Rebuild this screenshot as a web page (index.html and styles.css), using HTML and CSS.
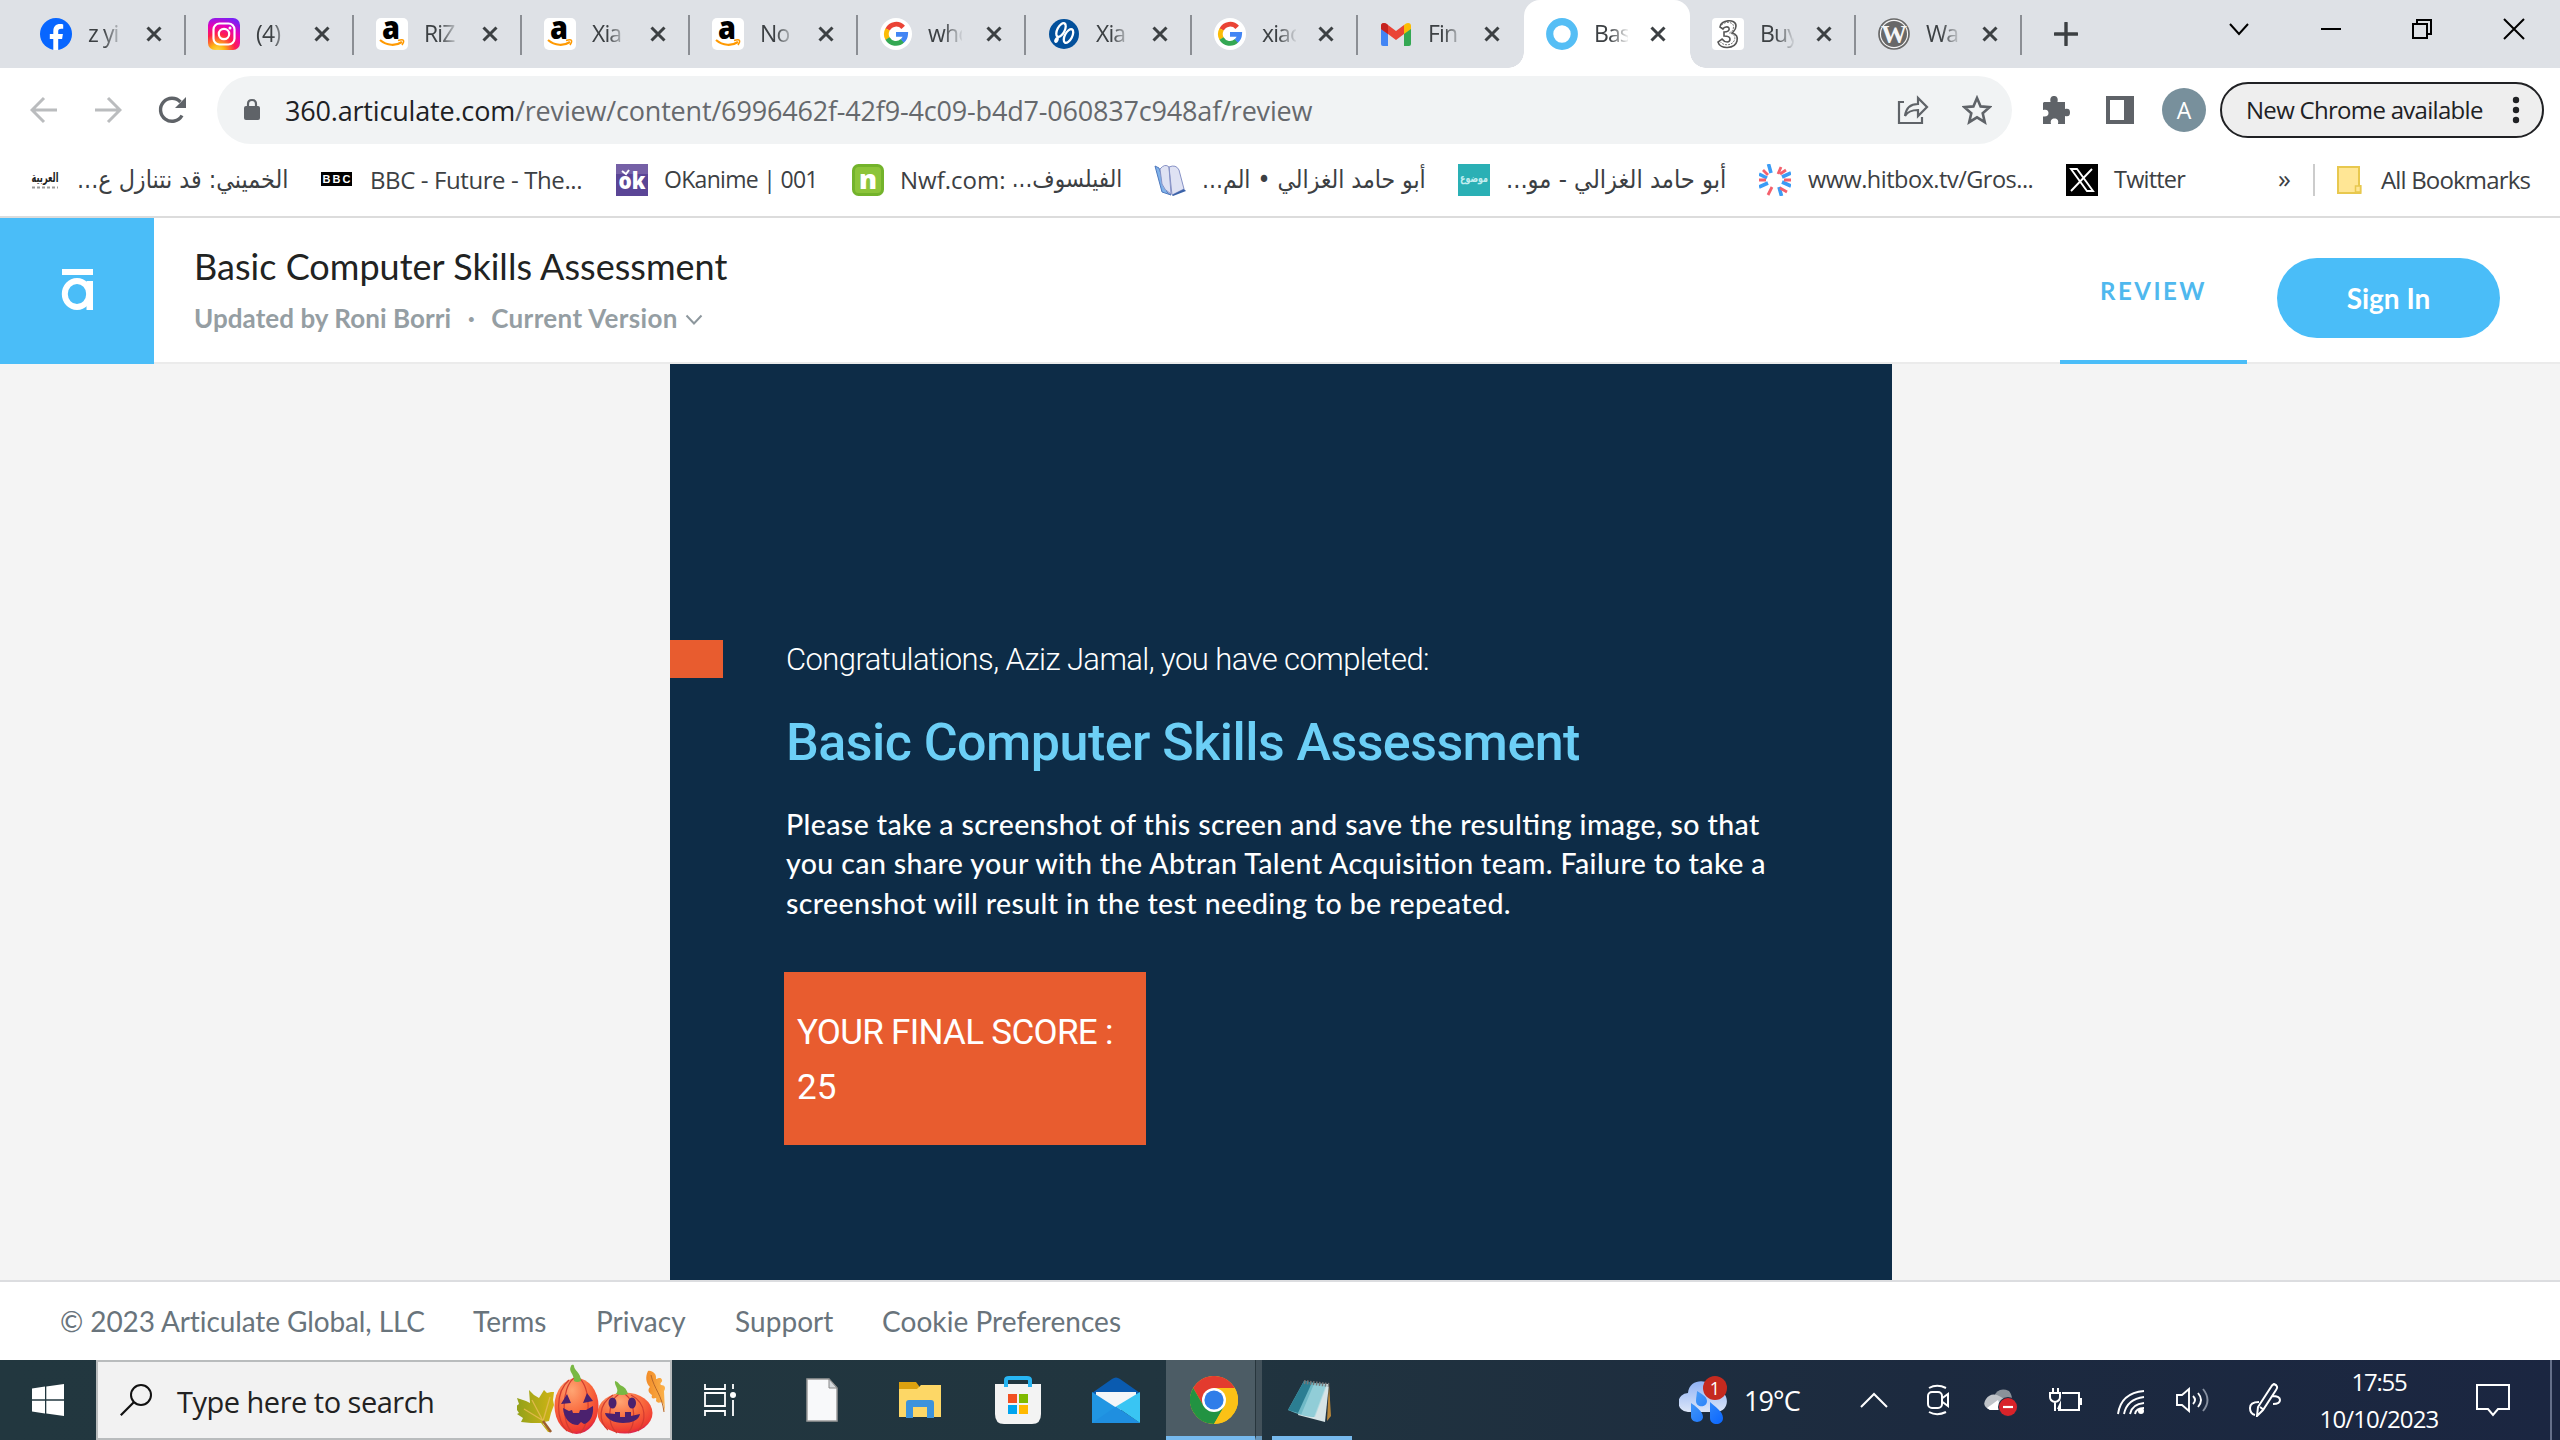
FILE: index.html
```html
<!DOCTYPE html>
<html lang="en">
<head>
<meta charset="utf-8">
<title>Basic Computer Skills Assessment</title>
<link rel="stylesheet" href="styles.css">
</head>
<body>
<svg class="defs" aria-hidden="true">
  <defs>
    <symbol id="x" viewBox="0 0 16 16"><path d="M1.500 1.500 14.500 14.500M14.500 1.500 1.500 14.500" stroke="#3c4043" stroke-width="3" fill="none"/></symbol>
    <symbol id="amazon" viewBox="0 0 32 32"><rect width="32" height="32" rx="5" fill="#fff"/><text x="15" y="21" font-family="Open Sans, sans-serif" font-size="32" font-weight="800" text-anchor="middle" textLength="18" lengthAdjust="spacingAndGlyphs">a</text><path d="M4 22c7 6 16 6 22 2" fill="none" stroke="#f90" stroke-width="2.200"/><path d="M22 22.500c3-1 5-1 5.500 0s-.5 3-1.500 4.500" fill="none" stroke="#f90" stroke-width="1.500"/></symbol>
    <symbol id="google" viewBox="0 0 32 32"><circle cx="16" cy="16" r="16" fill="#fff"/><g fill="none" stroke-width="4.800"><path d="M23.200 9.300A9.600 9.600 0 0 0 7.600 11.500" stroke="#ea4335"/><path d="M7.600 11.300a9.600 9.600 0 0 0 0 9.400" stroke="#fbbc05"/><path d="M7.500 20.500a9.600 9.600 0 0 0 15 2.300" stroke="#34a853"/><path d="M22.300 23A9.600 9.600 0 0 0 25.600 16.300H16" stroke="#4285f4"/></g></symbol>
  </defs>
</svg>

<header class="tabs">
  <div class="tab"><svg class="fav" viewBox="0 0 32 32"><circle cx="16" cy="16" r="16" fill="#0866ff"/><path d="M13.300 32V21H9.800v-5h3.500v-2.500c0-5 2.300-7.500 7-7.500 1 0 2.200.2 2.900.4v4.400h-2c-2.300 0-3 1-3 2.800V16h4.700l-.8 5h-3.900v11z" fill="#fff"/></svg><span class="tt">z yi</span><svg class="x"><use href="#x"/></svg></div>
  <div class="tab"><svg class="fav" viewBox="0 0 32 32"><defs><radialGradient id="ig" cx=".3" cy="1.050" r="1.100"><stop offset="0" stop-color="#fd5"/><stop offset=".2" stop-color="#fdb813"/><stop offset=".5" stop-color="#ff1e4b"/><stop offset=".75" stop-color="#e800b8"/><stop offset="1" stop-color="#7a20f5"/></radialGradient></defs><rect width="32" height="32" rx="7" fill="url(#ig)"/><g fill="none" stroke="#fff" stroke-width="2.200"><rect x="5.500" y="5.500" width="21" height="21" rx="6"/><circle cx="16" cy="16" r="5.200"/></g><circle cx="22" cy="10" r="1.500" fill="#fff"/></svg><span class="tt">(4)</span><svg class="x"><use href="#x"/></svg></div>
  <div class="tab"><svg class="fav"><use href="#amazon"/></svg><span class="tt">RiZ</span><svg class="x"><use href="#x"/></svg></div>
  <div class="tab"><svg class="fav"><use href="#amazon"/></svg><span class="tt">Xia</span><svg class="x"><use href="#x"/></svg></div>
  <div class="tab"><svg class="fav"><use href="#amazon"/></svg><span class="tt">No</span><svg class="x"><use href="#x"/></svg></div>
  <div class="tab"><svg class="fav"><use href="#google"/></svg><span class="tt">who</span><svg class="x"><use href="#x"/></svg></div>
  <div class="tab"><svg class="fav" viewBox="0 0 32 32"><circle cx="16" cy="16" r="15" fill="#03509b"/><g fill="none" stroke="#fff" stroke-width="2.300"><ellipse cx="13" cy="12" rx="3.600" ry="7.500" transform="rotate(28 13 12)"/><ellipse cx="20.500" cy="18" rx="3.600" ry="7.500" transform="rotate(28 20.500 18)"/></g><ellipse cx="8.500" cy="22" rx="2" ry="3" fill="#fff" transform="rotate(28 8.500 22)"/></svg><span class="tt">Xia</span><svg class="x"><use href="#x"/></svg></div>
  <div class="tab"><svg class="fav"><use href="#google"/></svg><span class="tt">xiao</span><svg class="x"><use href="#x"/></svg></div>
  <div class="tab last"><svg class="fav" viewBox="0 0 32 32"><path d="M1 8v18q0 2 2 2h5V13z" fill="#4285f4"/><path d="M24 13v15h5q2 0 2-2V9z" fill="#34a853"/><path d="M1 8q0-3 3-3 2 0 4 2l8 6 8-6v9l-8 6-8-6-7-5z" fill="#ea4335"/><path d="M1 8q0-3 3-3 2 0 4 2v9l-7-5z" fill="#c5221f"/><path d="M24 7q2-2 4-2 3 0 3 3v3l-7 5z" fill="#fbbc04"/></svg><span class="tt">Fin</span><svg class="x"><use href="#x"/></svg></div>
  <div class="tab active"><svg class="fav" viewBox="0 0 32 32"><circle cx="16" cy="16" r="12.300" fill="#fff" stroke="#55bef5" stroke-width="7.200"/></svg><span class="tt">Bas</span><svg class="x"><use href="#x"/></svg></div>
  <div class="tab"><svg class="fav" viewBox="0 0 32 32"><rect width="32" height="32" rx="4" fill="#fff"/><path d="M8 9c0-7 16-9 16-1 0 4-2 5-4 7 4 1 6 4 5 8-2 8-17 9-19 1l4-3c3 4 8 4 8 0 0-3-3-3-6-3v-4c3 0 6-1 5-4-1-2-5-1-6 1z" fill="none" stroke="#555" stroke-width="1.600"/><path d="M9.500 7C14 2.500 22 4 21.500 9c0 4-3 5-4 6 5 1 6 4 5 7-2 6-11 6-14 2" fill="none" stroke="#777" stroke-width="1" stroke-dasharray="2 1"/></svg><span class="tt">Buy</span><svg class="x"><use href="#x"/></svg></div>
  <div class="tab"><svg class="fav" viewBox="0 0 32 32"><circle cx="16" cy="16" r="15" fill="#f5f5f5" stroke="#686868" stroke-width="1.700"/><circle cx="16" cy="16" r="13" fill="#686868"/><text x="16" y="25" text-anchor="middle" font-family="Liberation Serif, serif" font-size="26" font-weight="700" fill="#f5f5f5">W</text></svg><span class="tt">Wa</span><svg class="x"><use href="#x"/></svg></div>
  <svg class="plus" viewBox="0 0 24 24"><path d="M12 1v22M1 12h22" stroke="#3c4043" stroke-width="3.400" stroke-linecap="round"/></svg>
  <svg class="win" viewBox="0 0 22 22"><path d="M2 6l9 10 9-10" fill="none" stroke="#000" stroke-width="2"/></svg>
  <svg class="win" viewBox="0 0 22 22"><path d="M1 11h20" stroke="#000" stroke-width="2"/></svg>
  <svg class="win" viewBox="0 0 22 22"><path d="M2 6h14v14H2zM6 6V2h14v14h-4" fill="none" stroke="#000" stroke-width="2"/></svg>
  <svg class="win" viewBox="0 0 22 22"><path d="M1 1l20 20M21 1 1 21" fill="none" stroke="#000" stroke-width="2"/></svg>
</header>

<div class="toolbar">
  <svg class="back" viewBox="0 0 28 28"><path d="M27 14H3M14 2 2 14l12 12" fill="none" stroke="#babcbe" stroke-width="3"/></svg>
  <svg class="fwd" viewBox="0 0 28 28"><path d="M1 14h24M14 2l12 12-12 12" fill="none" stroke="#babcbe" stroke-width="3"/></svg>
  <svg class="reload" viewBox="0 0 30 30"><path d="M25 20.500A11.500 11.500 0 1 1 23.500 7" fill="none" stroke="#5f6368" stroke-width="3.400"/><path d="M29 2v11H18z" fill="#5f6368"/></svg>
  <div class="omni">
    <svg class="lock" viewBox="0 0 18 24"><rect x="1" y="8" width="16" height="14" rx="2" fill="#5f6368"/><path d="M5 9V6q0-4 4-4t4 4v3" fill="none" stroke="#5f6368" stroke-width="2.200"/></svg>
    <span class="url"><b>360.articulate.com</b>/review/content/6996462f-42f9-4c09-b4d7-060837c948af/review</span>
    <svg class="share" viewBox="0 0 32 30"><path d="M7 7H2v21h23v-6M8 21c1-8 6-12 13-12V3l9 9-9 9v-6c-6 0-10 1-13 6z" fill="none" stroke="#5f6368" stroke-width="2.200"/></svg>
    <svg class="star" viewBox="0 0 30 30"><path d="M15 3l3.600 8.400 9 .8-6.900 6 2.100 9-7.800-4.800-7.800 4.800 2.100-9-6.900-6 9-.8z" fill="none" stroke="#5f6368" stroke-width="2.600"/></svg>
  </div>
  <svg class="puzzle" viewBox="0 0 30 30"><path d="M3 7h6.500C8.500 2 11 1 13 1s4.500 1 3.500 6H24v7c4-1 5 1 5 3.500S28 22 24 21v8h-7c1-4-1-5.500-3.500-5.500S9 25 10 29H2v-7.500c4 .5 5.500-1 5.500-3.500S6 14 2 15V8z" fill="#5f6368"/></svg>
  <svg class="panel" viewBox="0 0 28 28"><path d="M0 0h28v28H0zM4 4v20h14V4z" fill="#5f6368" fill-rule="evenodd"/></svg>
  <span class="avatar">A</span>
  <div class="chip"><span class="chiptext">New Chrome available</span><svg class="dots" viewBox="0 0 8 28"><circle cx="4" cy="4" r="3.200"/><circle cx="4" cy="14" r="3.200"/><circle cx="4" cy="24" r="3.200"/></svg></div>
</div>

<nav class="bookmarks">
  <div class="bm"><svg viewBox="0 0 32 32"><text x="16" y="18" direction="rtl" text-anchor="middle" font-family="DejaVu Sans, sans-serif" font-size="13" font-weight="700" fill="#222" textLength="27" lengthAdjust="spacingAndGlyphs">العربية</text><path d="M3 23.500h26" stroke="#999" stroke-width="2" stroke-dasharray="3 2"/></svg><span class="ar b1" dir="rtl">الخميني: قد نتنازل ع...</span></div>
  <div class="bm"><svg viewBox="0 0 32 32"><path d="M1 8h31v14H1z"/><g font-family="Liberation Sans, sans-serif" font-size="11" font-weight="700" fill="#fff" text-anchor="middle"><text x="6.500" y="19">B</text><text x="16.500" y="19">B</text><text x="26.500" y="19">C</text></g></svg><span class="b2">BBC - Future - The...</span></div>
  <div class="bm"><svg viewBox="0 0 32 32"><path d="M0 0h32v32H0z" fill="#5a4596"/><path d="M0 0h32v10H0z" fill="#7560a6"/><text x="16" y="25" text-anchor="middle" font-family="Open Sans, sans-serif" font-size="22" font-weight="800" fill="#fff" textLength="27" lengthAdjust="spacingAndGlyphs">ok</text><path d="M6 7l4 3 3-4" fill="none" stroke="#fff" stroke-width="2"/></svg><span class="b3">OKanime | 001</span></div>
  <div class="bm"><svg viewBox="0 0 32 32"><rect x="1.500" y="1.500" width="29" height="29" rx="5" fill="#8cc43a" stroke="#73b32b" stroke-width="3"/><text x="16" y="25" text-anchor="middle" font-family="Open Sans, sans-serif" font-size="27" font-weight="800" fill="#fff">n</text></svg><span class="b4">Nwf.com:&nbsp;</span><span class="ar b4a" dir="rtl">الفيلسوف...</span></div>
  <div class="bm"><svg viewBox="0 0 32 32"><path d="M1 2l4 2 8 24 4 3-9-3z" fill="#7fb2ea" stroke="#4f78bd"/><path d="M6 5q5-6 9-2l2 27Q10 26 8 20zM15 3q7-3 10 3l5 19-12 6z" fill="#dfe2f3" stroke="#8792c6"/><path d="M18 31l12-6 2 2-13 5z" fill="#3a62a8"/></svg><span class="ar b5" dir="rtl">أبو حامد الغزالي • الم...</span></div>
  <div class="bm"><svg viewBox="0 0 32 32"><path d="M0 0h32v32H0z" fill="#2ab0b5"/><text x="16" y="18" direction="rtl" text-anchor="middle" font-family="DejaVu Sans, sans-serif" font-size="11" font-weight="700" fill="#c3eef0" textLength="28" lengthAdjust="spacingAndGlyphs">موضوع</text></svg><span class="ar b6" dir="rtl">أبو حامد الغزالي - مو...</span></div>
  <div class="bm"><svg viewBox="0 0 32 32" fill="none" stroke-width="3.600"><path d="M12 9 9.500 0M8 14 0 10M9 19 0 23M20 23l2.500 9M23 18l9 4M23 13l9-4" stroke="#3b9cf5"/><path d="M19 10l3-7M9 11 4 6M7 16H0M13 23l-4 8M21 24l7 4M25 16h7M21 10l6-4" stroke="#f4606c" stroke-width="2.800"/></svg><span class="b7">www.hitbox.tv/Gros...</span></div>
  <div class="bm"><svg viewBox="0 0 32 32"><path d="M0 0h32v32H0z"/><path d="M5 5h6l16 22h-6zM26 5 5 27" fill="none" stroke="#fff" stroke-width="1.900"/></svg><span class="b8">Twitter</span></div>
  <span class="more">»</span>
  <div class="bm all"><svg viewBox="0 0 32 32"><path d="M1 3h21v19h1.500v7H1z" fill="#ffe695" stroke="#e8c84e" stroke-width="2"/><path d="M18.500 28v-6h5v6z" fill="#ffe695" stroke="#e8c84e" stroke-width="1.500"/></svg><span class="b9">All Bookmarks</span></div>
</nav>

<section class="apphead">
  <div class="logo"><svg viewBox="0 0 34 44"><path d="M1 1h31v6H1z" fill="#fff"/><ellipse cx="16" cy="26" rx="12.200" ry="13" fill="none" stroke="#fff" stroke-width="6"/><path d="M25.500 13H32v29h-6.500z" fill="#fff"/></svg></div>
  <div class="titles">
    <h1>Basic Computer Skills Assessment</h1>
    <p><span class="s1">Updated by Roni Borri</span><i>·</i><span class="s2">Current Version</span><svg viewBox="0 0 18 12"><path d="M1.500 1.500 9 9.500l7.500-8" fill="none" stroke="#8d979d" stroke-width="2"/></svg></p>
  </div>
  <div class="review">REVIEW</div>
  <button class="signin">Sign In</button>
</section>

<main class="stage">
  <article class="slide">
    <div class="lead"><i class="mark"></i><span class="congrats">Congratulations, Aziz Jamal, you have completed:</span></div>
    <h2>Basic Computer Skills Assessment</h2>
    <p class="para">Please take a screenshot of this screen and save the resulting image, so that<br>you can share your with the Abtran Talent Acquisition team. Failure to take a<br>screenshot will result in the test needing to be repeated.</p>
    <div class="score">YOUR FINAL SCORE :<br><span class="points">25</span></div>
  </article>
</main>

<footer class="foot">
  <span>© 2023 Articulate Global, LLC</span><span>Terms</span><span>Privacy</span><span>Support</span><span>Cookie Preferences</span>
</footer>

<div class="taskbar">
  <div class="start"><svg viewBox="0 0 32 32" fill="#fff"><path d="M0 4.500 13 2.600V15.300H0zM14.300 2.400 32 0v15.300H14.300zM0 16.700h13v12.700L0 27.500zM14.300 16.700H32V32l-17.700-2.400z"/></svg></div>
  <div class="search">
    <svg class="glass" viewBox="0 0 32 32"><circle cx="21" cy="11" r="10" fill="none" stroke="#111" stroke-width="2"/><path d="M14 18 .8 31.200" stroke="#111" stroke-width="2.200"/></svg>
    <span class="ph">Type here to search</span>
    <svg class="pumpkins" viewBox="0 0 150 72">
      <defs><radialGradient id="pk" cx=".4" cy=".22" r=".85"><stop offset="0" stop-color="#ffa573"/><stop offset=".5" stop-color="#f9683c"/><stop offset=".85" stop-color="#ef3a32"/><stop offset="1" stop-color="#c90f63"/></radialGradient><linearGradient id="lf" x1="0" x2="1"><stop offset="0" stop-color="#8fa01a"/><stop offset="1" stop-color="#d0b414"/></linearGradient><linearGradient id="oak" x1="0" x2="1"><stop offset="0" stop-color="#f28c28"/><stop offset="1" stop-color="#fbb24a"/></linearGradient></defs>
      <path d="M12 26l5 5 5 3 5-8 3 3 4-1 3 0-1 8 1 5-3 8-2 8-5 1-1 2 8 8-3 0-7-9-10 0-10-1 2-4-6-4 2-1-4-6 4-3-2-6 9 3 4 2z" fill="url(#lf)"/><path d="M15 36l10 19 7 12M7 45l18 11M33 33l-7 24" fill="none" stroke="#e0b94a" stroke-width="1.300"/><path d="M26 57l8 11" stroke="#9c5d2c" stroke-width="2.500"/>
      <ellipse cx="59.500" cy="42" rx="22" ry="28" fill="url(#pk)"/><ellipse cx="108" cy="49" rx="27.500" ry="20.500" fill="url(#pk)"/>
      <path d="M57 14C44 24 44 60 56 69M62 14c12 10 12 46 1 55M52 16c-14 12-13 40-2 51M102 30c-12 8-12 31-2 39M108 30c11 8 11 31 3 39M96 31c-16 10-14 27-5 35M114 31c17 9 15 27 7 36" fill="none" stroke="#d23c30" stroke-width="1.200"/>
      <path d="M57 17C57 9 51 8 54 2c1-2 3-1 3 0 0 4 7 7 7 15q-4 2-7 0z" fill="#79b843"/><path d="M99 30c4-5-2-8-1-13 4 1 4 4 7 5 4 2 5 5 6 8q-6 2-12 0z" fill="#79b843"/>
      <path d="M50 30l4 9-10 1zM70 29l6 8-10 2zM46 44l6 3 3-1 1 3 6 0 1-3 6 0 7-4c1 11-4 17-9 18l-3-2-3 3c-8 0-14-6-15-17z" fill="#4b216e"/>
      <ellipse cx="95.500" cy="39" rx="4" ry="5.500" fill="#4b216e"/><ellipse cx="115" cy="39" rx="4" ry="5.500" fill="#4b216e"/><path d="M88 49l10 1v-2h5v5h5v-5h6v4l9-2c-1 6-8 9-17 9s-17-4-18-10z" fill="#4b216e"/>
      <path d="M131 7c4-1 9 3 8 8 3-1 5-2 6 1 1 2-3 3-1 5 4 0 5 3 3 6l1 21-2-9c-2-2-4 1-6-1-2-1 0-3-1-4-4 1-5 0-4-3-3-2-5-5-2-8-4-4-5-10-2-16z" fill="url(#oak)"/><path d="M134 11c3 14 11 20 13 37" fill="none" stroke="#b8682a"/>
    </svg>
  </div>
  <svg class="tv" viewBox="0 0 32 32"><path d="M1 0v5h20V0M1 32v-5h20v5M1 9h20v13H1zM29 0v5M29 16v16" fill="none" stroke="#fff" stroke-width="1.800"/><circle cx="29" cy="11" r="3" fill="#fff"/></svg>
  <svg class="doc" viewBox="0 0 32 44"><path d="M1 1h22l8 9v33H1z" fill="#f8f9fa" stroke="#9a9a9a" stroke-width="1.500"/><path d="M23 1v9h8z" fill="#d5d9dc" stroke="#888"/></svg>
  <svg class="fold" viewBox="0 0 42 36"><path d="M0 0h17l3 4v6H0z" fill="#dca10f"/><path d="M0 7h18l4-4h20v32H0z" fill="#fdd766"/><path d="M7 36V21q0-3 3-3h22q3 0 3 3v15h-7V25H14v11z" fill="#3c93dc"/></svg>
  <svg class="store" viewBox="0 0 46 48"><path d="M0 8h46v30q0 10-9 10H9q-9 0-9-10z" fill="#f3f3f3"/><path d="M11 11V4q0-2 3-2h18q3 0 3 2v7" fill="none" stroke="#27b5f3" stroke-width="4"/><path d="M13 18h9v9h-9z" fill="#f25022"/><path d="M24 18h9v9h-9z" fill="#7fba00"/><path d="M13 29h9v9h-9z" fill="#00a4ef"/><path d="M24 29h9v9h-9z" fill="#ffb900"/></svg>
  <svg class="mail" viewBox="0 0 48 46"><path d="M0 16 20 2q4-3 8 0l20 14v6H0z" fill="#0a5bb0"/><path d="M4 15h40v18H4z" fill="#f4f6f8"/><path d="M0 15l48 31H0z" fill="#2196e3"/><path d="M48 15v31L24 29.500z" fill="#39c5f3"/><path d="M24 29.500 48 46H0z" fill="#1f8fe0"/></svg>
  <div class="chromecell"><svg viewBox="0 0 48 48"><circle cx="24" cy="24" r="24" fill="#fbc116"/><path d="M3.200 12A24 24 0 0 1 44.800 12H24L13.600 30z" fill="#e33b2e"/><path d="M3.200 12A24 24 0 0 0 24 48L34.400 30H13.600z" fill="#229342"/><path d="M44.800 12A24 24 0 0 1 24 48L34.400 30 24 12z" fill="#fbc116"/><circle cx="24" cy="24" r="12" fill="#fff"/><circle cx="24" cy="24" r="9.600" fill="#2f7de9"/></svg></div>
  <div class="chromestack"></div>
  <div class="notecell"><svg viewBox="0 0 48 44"><path d="M42 4l2 33-4 5z" fill="#b8863a"/><path d="M20 4l22 1-4 38-27-7z" fill="#d7e4e6"/><path d="M17 2l22 4-12 32q-13-1-26-7z" fill="#6fb9c6"/><path d="M17 2l8 1.500L11 34l-10-3z" fill="#2b7e92"/><path d="M27 5l13 1-12 32-14-2z" fill="#9fd6de" opacity=".7"/><path d="M17 3l25 3" stroke="#777" stroke-width="4" stroke-dasharray="1.500 1.500"/></svg></div>
  <svg class="weather" viewBox="0 0 48 48"><defs><linearGradient id="cl" x1="0" x2="0" y1="0" y2="1"><stop offset="0" stop-color="#8fb2f5"/><stop offset="1" stop-color="#dce6f8"/></linearGradient><linearGradient id="dr" x1="0" x2="1" y1="0" y2="1"><stop offset="0" stop-color="#4ea0f5"/><stop offset="1" stop-color="#0a66ff"/></linearGradient></defs><path d="M9 36a9.500 9.500 0 0 1 0-19C10 2 31 2 34 13c18 0 18 23 3 23z" fill="url(#cl)"/><path d="M18 15c3 2 10 5 10 10 0 7-11 7-11 0 0-4 1-7 1-10zM12 27c4 3 12 8 12 14s-11 7-12 0zM31 26c4 4 13 9 13 16 0 8-13 8-13 0z" fill="url(#dr)"/><circle cx="36" cy="12" r="12" fill="#c52a1f"/><text x="36" y="18.500" text-anchor="middle" font-family="Open Sans, sans-serif" font-size="18" fill="#fff">1</text></svg>
  <span class="temp">19°C</span>
  <svg class="up" viewBox="0 0 28 16"><path d="M1 15 14 2l13 13" fill="none" stroke="#fff" stroke-width="2"/></svg>
  <svg class="meet" viewBox="0 0 26 32" fill="none" stroke="#fff" stroke-width="2"><rect x="3" y="8" width="14" height="16" rx="4"/><path d="M17.500 14l5.500-4v12l-5.500-4M4 4q8-4.500 17 0M4 28q8 4.500 17 0"/></svg>
  <svg class="cloud" viewBox="0 0 34 30"><path d="M9 10Q14-2 25 3q4 5 3 12z" fill="#8a929a"/><path d="M6 22Q-3 18 2 11q4-6 11-4 8 3 9 8l-8 7z" fill="#bfc3c8"/><path d="M3 20l11-8 4 10H6z" fill="#fff"/><circle cx="24" cy="19" r="10" fill="#1f2d42"/><circle cx="24" cy="19" r="9" fill="#d8232a"/><path d="M19 19h10" stroke="#fff" stroke-width="2.200"/></svg>
  <svg class="batt" viewBox="0 0 34 24" fill="none" stroke="#fff" stroke-width="2"><path d="M13 5h17v17H9M32 10v7"/><path d="M4 0v5M9 0v5M1 5h10v4q0 4-5 5-5-1-5-5zM6 13v10"/><path d="M12 12v9H8z" fill="#fff" stroke="none"/></svg>
  <svg class="wifi" viewBox="0 0 28 26" fill="none" stroke="#fff" stroke-width="1.900"><path d="M1 25Q4 4 27 2M7 25Q10 10 27 8M13 25Q15 15 27 14"/><circle cx="24" cy="22" r="3" fill="#fff" stroke="none"/><path d="M18 25q1-6 9-6"/></svg>
  <svg class="vol" viewBox="0 0 34 26" fill="none" stroke="#fff" stroke-width="1.900"><path d="M1 8h5l7-6v22l-7-6H1zM17 9q4 4 0 8M22 6q6 7 0 14"/><path d="M27 2q9 11 0 22" stroke="#8790a0"/></svg>
  <svg class="pen" viewBox="0 0 34 34" fill="none" stroke="#fff" stroke-width="2"><path d="M26 1q5 2 2 6L15 27l-6 6 1-9L23 4q1-2 3-3zM12 24l4 3M11 19q-9 0-9 6t5 7M24 13q8 0 8 4t-7 4"/></svg>
  <div class="clock"><span class="ck">17:55</span><span class="dt">10/10/2023</span></div>
  <svg class="note" viewBox="0 0 34 34"><path d="M1 2h32v24h-11l-5 6-5-6H1z" fill="none" stroke="#fff" stroke-width="2"/></svg>
  <i class="peek"></i>
</div>
</body>
</html>
```
FILE: styles.css
```css
* { box-sizing: border-box; }
body { margin: 0; width: 2560px; height: 1440px; overflow: hidden; display: flex; flex-direction: column; background: #fff; color: #3c4043; font-family: "Open Sans", sans-serif; font-size: 24px; white-space: nowrap; }
svg { display: block; flex: none; }
h1, h2, p { margin: 0; font-weight: 400; }
i { font-style: normal; }
.defs { position: absolute; width: 0; height: 0; }

/* Tab strip */
.tabs { height: 68px; flex: none; background: #dee1e6; display: flex; align-items: flex-start; padding-left: 18px; }
.tab { width: 166px; height: 68px; display: flex; align-items: center; padding-left: 22px; position: relative; flex: none; }
.tab:nth-child(-n+6) { width: 168px; }
.tab::after { content: ""; position: absolute; right: 0; top: 15px; width: 2px; height: 40px; background: #8b8e94; }
.tab.last::after, .tab.active::after { display: none; }
.tab.active { background: #fff; border-radius: 16px 16px 0 0; }
.tab.active::before { content: ""; position: absolute; left: -16px; right: -16px; bottom: 0; height: 16px; background: radial-gradient(circle at 0 0, transparent 15.5px, #fff 16px) left / 16px 16px no-repeat, radial-gradient(circle at 100% 0, transparent 15.5px, #fff 16px) right / 16px 16px no-repeat; }
.fav { width: 32px; height: 32px; }
.tt { width: 34px; margin: -2px 22px 0 16px; overflow: hidden; font-size: 23px; letter-spacing: -0.9px; -webkit-mask-image: linear-gradient(90deg, #000 45%, transparent 105%); mask-image: linear-gradient(90deg, #000 45%, transparent 105%); }
.tab:nth-child(-n+6) .tt { margin-right: 24px; }
.x { width: 16px; height: 16px; }
.plus { width: 24px; height: 24px; margin: 22px 150px 0 32px; }
.win { width: 22px; height: 22px; margin: 18px 69.5px 0 0; }
.win:last-child { margin-right: 0; }

/* Address bar */
.toolbar { height: 84px; flex: none; display: flex; align-items: center; padding-left: 30px; }
.back, .fwd { width: 28px; height: 28px; }
.fwd { margin-left: 36px; }
.reload { width: 30px; height: 30px; margin-left: 35px; }
.omni { width: 1795px; height: 68px; margin-left: 30px; border-radius: 34px; background: #f1f3f4; display: flex; align-items: center; padding-left: 26px; }
.lock { width: 18px; height: 24px; }
.url { width: 1612px; margin: 0 0 0 24px; font-size: 27px; letter-spacing: -0.18px; color: #66696d; }
.url b { font-weight: 400; color: #202124; }
.share { width: 32px; height: 30px; }
.star { width: 30px; height: 30px; margin-left: 33px; }
.puzzle { width: 30px; height: 30px; margin-left: 29px; }
.panel { width: 28px; height: 28px; margin-left: 35px; }
.avatar { width: 44px; height: 44px; margin-left: 28px; border-radius: 50%; background: #78909c; color: #fff; font-size: 23px; line-height: 44px; text-align: center; }
.chip { width: 324px; height: 56px; margin-left: 14px; border: 2px solid #202124; border-radius: 28px; background: #eee; display: flex; align-items: center; padding-left: 24px; }
.chiptext { width: 266px; margin-top: -2px; color: #202124; font-size: 24px; letter-spacing: -0.7px; }
.dots { width: 8px; height: 28px; fill: #202124; }

/* Bookmarks */
.bookmarks { height: 66px; flex: none; border-bottom: 2px solid #dcdcdc; display: grid; grid-template-columns: 291px 296px 236px 302px 304px 301px 307px 212px 35px auto; padding: 0 0 8px 29px; align-items: center; }
.bm { display: flex; align-items: center; }
.bm span { margin-top: -2px; }
.bm svg { width: 32px; height: 32px; margin-right: 16px; }
.ar { font-family: "DejaVu Sans Condensed", "DejaVu Sans", sans-serif; font-size: 24.5px; }
.b1 { font-size: 24.8px; }
.b2 { letter-spacing: -0.4px; padding-left: 2px; }
.b3 { font-size: 23px; letter-spacing: -0.7px; }
.b4a { font-size: 24px; }
.b5 { font-size: 24.5px; }
.b6 { font-size: 25.2px; }
.b7 { font-size: 23.5px; letter-spacing: -0.5px; padding-left: 1px; }
.b8 { font-size: 23.5px; letter-spacing: -0.8px; }
.b9 { letter-spacing: -0.84px; }
.more { font-size: 26px; margin-top: -4px; }
.all { border-left: 2px solid #ccc; padding-left: 22px; }
.all svg { margin-right: 12px; }

/* Application header */
.apphead { height: 146px; flex: none; border-bottom: 2px solid #ebebeb; display: flex; font-family: Lato, sans-serif; }
.logo { width: 154px; height: 146px; background: #4abdf8; padding: 50px 0 0 61px; }
.logo svg { width: 34px; height: 44px; }
.titles { width: 1906px; padding: 26px 0 0 40px; }
.titles h1 { font-size: 36px; line-height: 44px; letter-spacing: 0.02px; color: #212322; }
.titles p { display: flex; align-items: center; font-size: 26px; font-weight: 700; line-height: 32px; margin-top: 14px; color: #959ea3; }
.titles i { width: 40px; text-align: center; }
.titles p svg { width: 18px; height: 12px; margin: 4px 0 0 7px; }
.s1 { letter-spacing: 0.06px; }
.s2 { letter-spacing: 0.36px; }
.review { width: 187px; height: 146px; border-bottom: 4px solid #4abdf8; color: #4fb8ee; font-size: 24px; font-weight: 700; letter-spacing: 2.5px; line-height: 30px; padding: 58px 0 0 40px; }
.signin { width: 223px; height: 80px; margin: 40px 0 0 30px; border: 0; border-radius: 40px; background: #4abdf8; color: #fff; font: 700 28px/80px Lato, sans-serif; padding: 0 0 2px; }

/* Course slide */
.stage { height: 916px; flex: none; background: #f4f4f4; padding-left: 670px; }
.slide { width: 1222px; height: 916px; background: #0d2c47; padding-top: 276px; color: #fff; font-family: Roboto, sans-serif; }
.lead { height: 38px; display: flex; align-items: center; font-size: 31px; font-weight: 300; letter-spacing: -0.58px; }
.mark { width: 53px; height: 38px; margin-right: 63px; background: #e85c2f; }
.slide h2 { padding: 30px 0 0 116px; font-size: 52px; line-height: 70px; font-weight: 500; letter-spacing: -0.54px; color: #6ccff6; }
.para { padding: 27px 0 0 116px; font: 500 28.5px/39.3px Lato, sans-serif; letter-spacing: 0.39px; font-feature-settings: "liga" 1; }
.score { width: 362px; height: 173px; margin: 49px 0 0 114px; padding: 33px 0 0 13px; background: #e85c2f; font-size: 35px; line-height: 55px; letter-spacing: -0.7px; }
.points { letter-spacing: 0; }

/* Footer */
.foot { height: 80px; flex: none; border-top: 2px solid #dcdde0; display: grid; grid-template-columns: 413px 123px 139px 147px auto; padding: 0 0 1px 60px; align-items: center; color: #69747c; font-family: Lato, sans-serif; font-size: 28px; letter-spacing: 0.06px; }
.foot span:first-child { letter-spacing: -0.1px; }

/* Taskbar */
.taskbar { height: 80px; flex: none; display: flex; align-items: center; color: #fff; background: linear-gradient(90deg, #22373f 0%, #21353f 45%, #1c2a3f 75%, #1b2641 100%); }
.start { width: 96px; padding-left: 32px; }
.start svg { width: 32px; height: 32px; }
.search { width: 576px; height: 80px; border: 2px solid #b9bcbd; background: #f2f2f2; color: #222; display: flex; align-items: center; padding-left: 22px; }
.glass { width: 32px; height: 32px; }
.ph { width: 340px; margin: 3px 0 0 25px; font-size: 29px; letter-spacing: -0.5px; }
.pumpkins { width: 150px; height: 72px; }
.tv { width: 32px; height: 32px; margin-left: 32px; }
.doc { width: 32px; height: 44px; margin-left: 70px; }
.fold { width: 42px; height: 36px; margin-left: 61px; }
.store { width: 46px; height: 48px; margin-left: 54px; }
.mail { width: 48px; height: 46px; margin-left: 51px; }
.chromecell { width: 89px; height: 80px; margin-left: 26px; border-bottom: 4px solid #76b9ed; background: #4c5c65; padding: 16px 0 0 24px; }
.chromecell svg { width: 48px; height: 48px; }
.chromestack { width: 7px; height: 80px; border-left: 1px solid #28363d; border-bottom: 4px solid #6798bd; background: #42515a; }
.notecell { width: 80px; height: 80px; margin-left: 10px; border-bottom: 4px solid #76b9ed; padding: 19px 0 0 15px; }
.notecell svg { width: 48px; height: 44px; }
.weather { width: 48px; height: 48px; margin-left: 327px; }
.temp { width: 84px; padding-left: 17px; font-size: 27px; letter-spacing: -0.9px; }
.up { width: 28px; height: 16px; margin-left: 49px; }
.meet { width: 26px; height: 32px; margin-left: 37px; }
.cloud { width: 34px; height: 30px; margin-left: 33px; margin-top: 5px; }
.batt { width: 34px; height: 24px; margin-left: 31px; }
.wifi { width: 28px; height: 26px; margin: 3px 0 0 34px; }
.vol { width: 34px; height: 26px; margin-left: 31px; }
.pen { width: 34px; height: 34px; margin-left: 38px; }
.clock { width: 130px; margin-left: 32px; font-size: 24px; line-height: 37px; display: flex; flex-direction: column; align-items: center; }
.ck { letter-spacing: -1.2px; }
.dt { letter-spacing: -0.84px; }
.note { width: 34px; height: 34px; margin-left: 32px; }
.peek { width: 2px; height: 80px; margin-left: 40px; background: #65708a; }
```
